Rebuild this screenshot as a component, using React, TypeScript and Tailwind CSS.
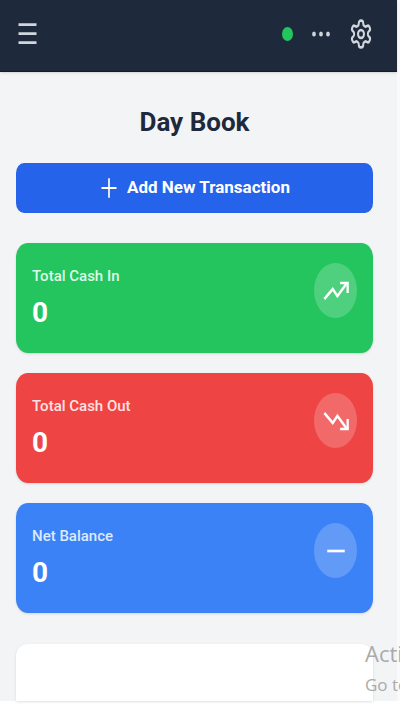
import React from "react";

type IconProps = { className: string; children: React.ReactNode; strokeWidth?: number };

function Icon({ className, children, strokeWidth = 2 }: IconProps) {
  return (
    <svg
      viewBox="0 0 24 24"
      preserveAspectRatio="none"
      fill="none"
      stroke="currentColor"
      strokeWidth={strokeWidth}
      className={className}
      aria-hidden="true"
    >
      {children}
    </svg>
  );
}

type Summary = { label: string; value: number; card: string; text: string; icon: React.ReactNode };

const summaries: Summary[] = [
  {
    label: "Total Cash In",
    value: 0,
    card: "bg-[#24c55e]",
    text: "text-green-100",
    icon: (
      <>
        <path d="M2 18 L9.2 10.5 L13.2 15.8 L21 6.5" />
        <path d="M15.5 6 H22 V13.5" />
      </>
    ),
  },
  {
    label: "Total Cash Out",
    value: 0,
    card: "bg-[#ef4444]",
    text: "text-red-100",
    icon: (
      <>
        <path d="M2 6 L9.2 13.5 L13.2 8.2 L21 17.5" />
        <path d="M15.5 18 H22 V10.5" />
      </>
    ),
  },
  {
    label: "Net Balance",
    value: 0,
    card: "bg-[#3b82f6]",
    text: "text-blue-100",
    icon: <path d="M4.5 12 H19.5" />,
  },
];

export default function App() {
  return (
    <div className="relative min-h-screen overflow-hidden bg-white font-['Roboto',sans-serif]">
      <div className="border-r-3 border-[#fafafa] bg-[#f3f4f6]">
        <header className="flex h-18 items-center justify-between border-b border-[#111c30] bg-[#1e293b] pr-6 pl-4 text-gray-300 shadow-sm">
          <button type="button" aria-label="Open menu" className="-mt-1">
            <Icon className="h-8 w-6" strokeWidth={2}>
              <path d="M2.5 5 H20.5 M2.5 11.7 H20.5 M2.5 18.5 H20.5" />
            </Icon>
          </button>
          <div className="-mt-1 flex items-center gap-4">
            <span role="status" aria-label="Online" className="h-[14px] w-[11px] rounded-[50%] bg-[#22c55e]" />
            <button type="button" aria-label="More options">
              <Icon className="h-8 w-6" strokeWidth={1.8}>
                <circle cx="5" cy="12" r="1" />
                <circle cx="12" cy="12" r="1" />
                <circle cx="19" cy="12" r="1" />
              </Icon>
            </button>
            <button type="button" aria-label="Settings">
              <Icon className="h-8 w-6">
                <path
                  strokeLinejoin="round"
                  d="M12.22 2h-.44a2 2 0 0 0-2 2v.18a2 2 0 0 1-1 1.73l-.43.25a2 2 0 0 1-2 0l-.15-.08a2 2 0 0 0-2.73.73l-.22.38a2 2 0 0 0 .73 2.73l.15.1a2 2 0 0 1 1 1.72v.51a2 2 0 0 1-1 1.74l-.15.09a2 2 0 0 0-.73 2.73l.22.38a2 2 0 0 0 2.73.73l.15-.08a2 2 0 0 1 2 0l.43.25a2 2 0 0 1 1 1.73V20a2 2 0 0 0 2 2h.44a2 2 0 0 0 2-2v-.18a2 2 0 0 1 1-1.73l.43-.25a2 2 0 0 1 2 0l.15.08a2 2 0 0 0 2.73-.73l.22-.39a2 2 0 0 0-.73-2.73l-.15-.08a2 2 0 0 1-1-1.74v-.5a2 2 0 0 1 1-1.74l.15-.09a2 2 0 0 0 .73-2.73l-.22-.38a2 2 0 0 0-2.73-.73l-.15.08a2 2 0 0 1-2 0l-.43-.25a2 2 0 0 1-1-1.73V4a2 2 0 0 0-2-2z"
                />
                <circle cx="12" cy="12" r="3" />
              </Icon>
            </button>
          </div>
        </header>

        <main className="pt-8 pr-6 pl-4">
          <h1 className="text-center text-[26px] leading-9 font-bold text-[#1e293b]">Day Book</h1>
          <button
            type="button"
            className="mt-[23px] flex h-[50px] w-full items-center justify-center gap-2 rounded-[8px/10px] bg-[#2563eb] text-[17px] font-bold text-white"
          >
            <Icon className="h-[26px] w-5" strokeWidth={2}>
              <path d="M12 3 V21 M3 12 H21" />
            </Icon>
            Add New Transaction
          </button>

          <div className="mt-[30px] flex flex-col gap-5">
            {summaries.map((item) => (
              <section
                key={item.label}
                className={`flex h-[110px] items-start justify-between rounded-[12px/14px] px-4 pt-5 text-white shadow-sm ${item.card}`}
              >
                <div>
                  <h2 className={`text-[15px] leading-[26px] font-medium ${item.text}`}>{item.label}</h2>
                  <p className="mt-1 text-[28px] leading-10 font-bold">{item.value}</p>
                </div>
                <span className="flex h-[55px] w-[43px] items-center justify-center rounded-[50%] bg-white/20">
                  <Icon className="h-8 w-7">{item.icon}</Icon>
                </span>
              </section>
            ))}
          </div>

          <section aria-label="Transactions" className="mt-[31px] h-[57px] rounded-t-[12px] bg-white shadow-sm" />
        </main>
      </div>

      <div className="absolute top-[637px] left-[365px] font-['Open_Sans',sans-serif] whitespace-nowrap text-[#aaaaaa]">
        <p className="text-[22px] leading-8">Acti</p>
        <p className="text-[17px] leading-8">Go to</p>
      </div>
    </div>
  );
}
